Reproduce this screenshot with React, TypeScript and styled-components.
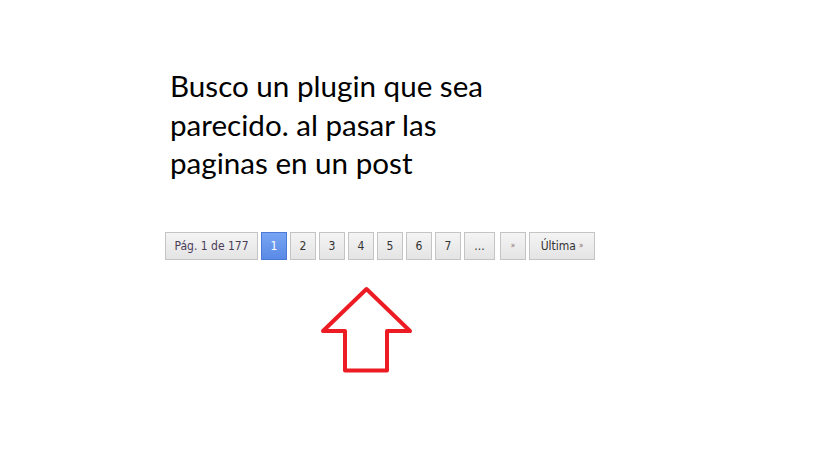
import React from "react";
import styled, { createGlobalStyle } from "styled-components";

const Global = createGlobalStyle`
  html, body { margin: 0; padding: 0; background: #fff; }
  body { width: 819px; height: 460px; overflow: hidden; }
`;

const Page = styled.div`
  display: flex;
  flex-direction: column;
  padding: 67px 0 0 165px;
`;

const Question = styled.p`
  margin: 0 0 0 5px;
  font-family: Lato, "Open Sans", sans-serif;
  font-size: 29.6px;
  line-height: 38.5px;
  color: #000;
`;

const Pager = styled.nav`
  display: flex;
  gap: 3px;
  margin-top: 49px;
`;

type Kind = "info" | "num" | "dots" | "next" | "last";
const widths: Record<Kind, number> = { info: 93, num: 26, dots: 31, next: 26, last: 66 };

const PageBtn = styled.span<{ $kind: Kind; $active?: boolean }>`
  box-sizing: border-box;
  display: flex;
  align-items: center;
  justify-content: center;
  width: ${(p) => widths[p.$kind]}px;
  height: 28px;
  margin-right: ${(p) => (p.$kind === "dots" ? 2 : 0)}px;
  border: 1px solid ${(p) => (p.$active ? "#4a7ad6" : "#c4c4c4")};
  background: ${(p) =>
    p.$active
      ? "linear-gradient(#78a4f2, #5a8ae6)"
      : "linear-gradient(#f4f4f4, #e4e4e4)"};
  color: ${(p) => (p.$active ? "#fff" : p.$kind === "info" ? "#4a3c58" : "#333")};
  font-family: "DejaVu Sans Condensed", "DejaVu Sans", sans-serif;
  font-size: 12px;
  white-space: nowrap;
`;

const Small = styled.span<{ $gap?: number }>`
  font-size: 8px;
  color: #8a6a6a;
  margin-left: ${(p) => p.$gap ?? 0}px;
`;

const ArrowWrap = styled.div`
  margin: 24px 0 0 155px;
  width: 94px;
  height: 92px;
`;

const UpArrow = () => (
  <svg width="94" height="92" viewBox="320 284 94 92">
    <path
      d="M366.5 289 L410 331 L387 331 L387 370.5 L345 370.5 L345 331 L323 331 Z"
      fill="none"
      stroke="#ed1c24"
      strokeWidth="4"
      strokeLinejoin="round"
    />
  </svg>
);

export default function App() {
  return (
    <>
      <Global />
      <Page>
        <Question>
          Busco un plugin que sea
          <br />
          parecido. al pasar las
          <br />
          paginas en un post
        </Question>
        <Pager>
          <PageBtn $kind="info">Pág. 1 de 177</PageBtn>
          <PageBtn $kind="num" $active>1</PageBtn>
          {[2, 3, 4, 5, 6, 7].map((n) => (
            <PageBtn key={n} $kind="num">{n}</PageBtn>
          ))}
          <PageBtn $kind="dots">...</PageBtn>
          <PageBtn $kind="next"><Small>»</Small></PageBtn>
          <PageBtn $kind="last">Última<Small $gap={3}>»</Small></PageBtn>
        </Pager>
        <ArrowWrap>
          <UpArrow />
        </ArrowWrap>
      </Page>
    </>
  );
}
